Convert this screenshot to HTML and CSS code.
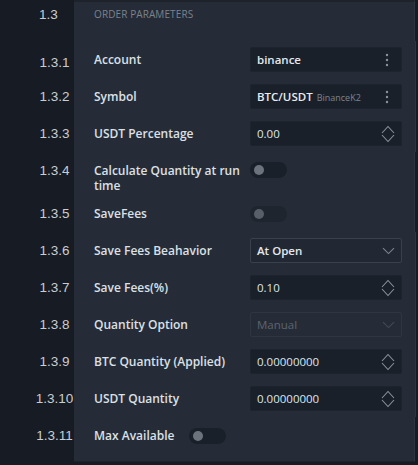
FILE: index.html
```html
<!DOCTYPE html>
<html>
<head>
<meta charset="utf-8">
<link rel="stylesheet" href="styles.css">
</head>
<body>
<div class="sheet">
  <div class="row head">
    <div class="num num-head">1.3</div>
    <div class="cell cell-head"><span class="section">ORDER PARAMETERS</span></div>
  </div>

  <div class="row">
    <div class="num num-low">1.3.1</div>
    <div class="cell">
      <span class="lbl">Account</span>
      <div class="field">
        <span class="val">binance</span>
        <svg class="kebab" width="4" height="14" viewBox="0 0 4 14"><circle cx="2" cy="2" r="1.2"/><circle cx="2" cy="7" r="1.2"/><circle cx="2" cy="12" r="1.2"/></svg>
      </div>
    </div>
  </div>

  <div class="row">
    <div class="num">1.3.2</div>
    <div class="cell">
      <span class="lbl">Symbol</span>
      <div class="field">
        <span class="val val-strong">BTC/USDT</span><span class="sub">BinanceK2</span>
        <svg class="kebab" width="4" height="14" viewBox="0 0 4 14"><circle cx="2" cy="2" r="1.2"/><circle cx="2" cy="7" r="1.2"/><circle cx="2" cy="12" r="1.2"/></svg>
      </div>
    </div>
  </div>

  <div class="row">
    <div class="num">1.3.3</div>
    <div class="cell">
      <span class="lbl">USDT Percentage</span>
      <div class="field">
        <span class="val val-num">0.00</span>
        <svg class="spin" width="14" height="18" viewBox="0 0 14 18"><path d="M1 8 L7 1.5 L13 8 M1 10 L7 16.5 L13 10"/></svg>
      </div>
    </div>
  </div>

  <div class="row row-tall">
    <div class="num">1.3.4</div>
    <div class="cell">
      <span class="lbl">Calculate Quantity at run time</span>
      <div class="toggle"><span class="knob"></span></div>
    </div>
  </div>

  <div class="row">
    <div class="num">1.3.5</div>
    <div class="cell">
      <span class="lbl">SaveFees</span>
      <div class="toggle toggle-dim"><span class="knob"></span></div>
    </div>
  </div>

  <div class="row">
    <div class="num">1.3.6</div>
    <div class="cell">
      <span class="lbl">Save Fees Beahavior</span>
      <div class="field select">
        <span class="val">At Open</span>
        <svg class="chev" width="13" height="8" viewBox="0 0 13 8"><path d="M1 1.2 L6.5 6.6 L12 1.2"/></svg>
      </div>
    </div>
  </div>

  <div class="row">
    <div class="num">1.3.7</div>
    <div class="cell">
      <span class="lbl">Save Fees(%)</span>
      <div class="field">
        <span class="val val-num">0.10</span>
        <svg class="spin" width="14" height="18" viewBox="0 0 14 18"><path d="M1 8 L7 1.5 L13 8 M1 10 L7 16.5 L13 10"/></svg>
      </div>
    </div>
  </div>

  <div class="row">
    <div class="num">1.3.8</div>
    <div class="cell">
      <span class="lbl">Quantity Option</span>
      <div class="field select disabled">
        <span class="val">Manual</span>
        <svg class="chev" width="13" height="8" viewBox="0 0 13 8"><path d="M1 1.2 L6.5 6.6 L12 1.2"/></svg>
      </div>
    </div>
  </div>

  <div class="row">
    <div class="num">1.3.9</div>
    <div class="cell">
      <span class="lbl">BTC Quantity (Applied)</span>
      <div class="field">
        <span class="val val-num">0.00000000</span>
        <svg class="spin" width="14" height="18" viewBox="0 0 14 18"><path d="M1 8 L7 1.5 L13 8 M1 10 L7 16.5 L13 10"/></svg>
      </div>
    </div>
  </div>

  <div class="row">
    <div class="num">1.3.10</div>
    <div class="cell">
      <span class="lbl">USDT Quantity</span>
      <div class="field">
        <span class="val val-num">0.00000000</span>
        <svg class="spin" width="14" height="18" viewBox="0 0 14 18"><path d="M1 8 L7 1.5 L13 8 M1 10 L7 16.5 L13 10"/></svg>
      </div>
    </div>
  </div>

  <div class="row row-last">
    <div class="num">1.3.11</div>
    <div class="cell cell-inline">
      <span class="lbl lbl-auto">Max Available</span>
      <div class="toggle"><span class="knob"></span></div>
    </div>
  </div>

  <div class="row row-foot">
    <div class="num"></div>
    <div class="cell"></div>
  </div>
</div>
</body>
</html>
```

FILE: styles.css
```css
html, body {
  margin: 0;
  padding: 0;
  background: #171c24;
}

.sheet {
  width: 418px;
  height: 465px;
  display: flex;
  flex-direction: column;
  background: #171c24;
  overflow: hidden;
}

.row {
  display: flex;
  height: 37px;
}

.num {
  flex: 0 0 74px;
  box-sizing: border-box;
  padding-left: 35px;
  text-align: center;
  font-family: "Liberation Sans", Arial, sans-serif;
  font-size: 13.5px;
  color: #c9cdd3;
  display: flex;
  align-items: center;
  justify-content: center;
}

.num-head {
  justify-content: flex-start;
  padding-left: 39px;
  align-items: flex-start;
  padding-top: 7px;
}

.num-low {
  padding-top: 6px;
}

.cell {
  flex: 0 0 341px;
  box-sizing: border-box;
  background: #262c37;
  border-right: 1px solid #2e3541;
  padding: 0 13px 0 20px;
  display: flex;
  align-items: center;
  font-family: "Open Sans", "Noto Sans", sans-serif;
}

.head {
  height: 41px;
}

.cell-head {
  border-top: 2px solid #1d222b;
  align-items: flex-start;
  padding-top: 5px;
}

.section {
  font-size: 10px;
  line-height: 14px;
  color: #7b828c;
  letter-spacing: 0.1px;
}

.lbl {
  flex: 0 0 156px;
  box-sizing: border-box;
  padding-right: 6px;
  font-size: 12px;
  font-weight: 600;
  line-height: 15px;
  color: #dbe0e7;
}

.lbl-auto {
  flex: 0 0 auto;
  padding-right: 0;
  margin-right: 15px;
}

.row-tall {
  height: 43px;
}

.row-tall .num {
  align-items: flex-start;
  padding-top: 11px;
}

.row-tall .cell {
  align-items: flex-start;
  padding-top: 11px;
}

.row-tall .toggle {
  margin-top: -1px;
}

.field {
  flex: 0 0 152px;
  box-sizing: border-box;
  height: 25px;
  display: flex;
  align-items: center;
  padding: 0 6px 0 6px;
  background: #19202a;
  border: 1px solid #1d242e;
  border-radius: 2px;
}

.val {
  font-size: 11.5px;
  font-weight: 600;
  color: #e3e8ee;
  white-space: nowrap;
}

.val-num {
  font-weight: 400;
  color: #dfe5ec;
}

.val-strong {
  font-weight: 600;
  color: #e8ecf1;
}

.sub {
  font-size: 9px;
  color: #7d858f;
  margin-left: 4px;
  margin-top: 2px;
}

.kebab {
  margin-left: auto;
  margin-right: 6px;
  fill: #8b929c;
}

.spin {
  margin-left: auto;
  margin-right: 0;
  fill: none;
  stroke: #8a929c;
  stroke-width: 1.1;
}

.select {
  background: #222833;
  border: 1px solid #39414d;
}

.chev {
  margin-left: auto;
  margin-right: 0;
  fill: none;
  stroke: #7b838e;
  stroke-width: 1.1;
}

.disabled {
  background: #262c37;
  border: 1px solid #2f3641;
}

.disabled .val {
  color: #5d646e;
  font-weight: 400;
}

.disabled .chev {
  stroke: #434a55;
}

.toggle {
  flex: 0 0 37px;
  height: 16px;
  border-radius: 8px;
  background: #1a2029;
  display: flex;
  align-items: center;
  padding-left: 4px;
  box-sizing: border-box;
}

.knob {
  width: 10px;
  height: 10px;
  border-radius: 50%;
  background: #6d737d;
}

.toggle-dim {
  background: #1f252e;
}

.toggle-dim .knob {
  background: #585f69;
}

.row-foot {
  height: 8px;
}

.row-foot .cell {
  border-bottom: 1px solid #1d222b;
}
```
